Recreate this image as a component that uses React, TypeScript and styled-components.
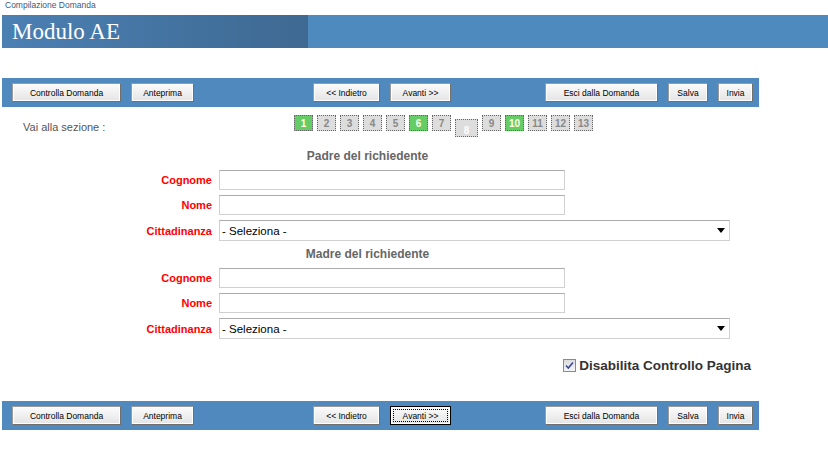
import React from 'react'
import styled, { createGlobalStyle, css } from 'styled-components'

const GlobalS = createGlobalStyle`
  html, body {
    margin: 0;
    padding: 0;
    background: #fff;
  }
  body {
    font-family: "Liberation Sans", Arial, sans-serif;
  }
`;

const PageS = styled.div`
  width: 828px;
  height: 460px;
  overflow: hidden;
  background: #fff;
`;

const Crumb = styled.div`
  height: 15px;
  padding-left: 5px;
  font-size: 8.5px;
  line-height: 11px;
  color: #3a5a80;
`;

const HeaderBar = styled.div`
  display: flex;
  height: 33px;
  margin-left: 2px;
  background: #4f8abf;
`;

const TitleBlock = styled.div`
  display: flex;
  align-items: center;
  width: 306px;
  padding-left: 10px;
  box-sizing: border-box;
  background: linear-gradient(to right, #4b80b3, #3e6992);

  h1 {
    margin: 0;
    font-family: "Liberation Serif", "Times New Roman", serif;
    font-weight: normal;
    font-size: 23px;
    color: #fff;
    line-height: 1;
    padding-bottom: 1px;
  }
`;

const Toolbar = styled.div<{ $top: number }>`
  display: flex;
  align-items: center;
  width: 757px;
  height: 29px;
  margin: ${p => p.$top}px 0 0 2px;
  padding-left: 10px;
  box-sizing: border-box;
  background: #5089bd;
`;

const Group = styled.div<{ $offset: number }>`
  display: flex;
  gap: 10px;
  margin-left: ${p => p.$offset}px;
`;

const Btn = styled.button<{ $w: number; $focus?: boolean }>`
  width: ${p => p.$w}px;
  height: 19px;
  padding: 0;
  font-family: "Liberation Sans", Arial, sans-serif;
  font-size: 8.5px;
  color: #000;
  background: linear-gradient(#fbfbfb, #e4e4e4);
  border: 1px solid #6f6f6f;
  border-top-color: #9a9a9a;
  border-left-color: #9a9a9a;
  box-shadow: inset 0 0 0 1px #fdfdfd;
  cursor: pointer;

  ${p => p.$focus && css`
    border: 1px solid #000;
    outline: 1px dotted #000;
    outline-offset: -4px;
  `}
`;

const NavRow = styled.div`
  display: flex;
  align-items: flex-start;
  height: 22px;
  margin-top: 8px;
`;

const NavLabel = styled.div`
  width: 271px;
  padding: 6px 0 0 23px;
  font-size: 11px;
  color: #555;
`;

const Sections = styled.div`
  display: flex;
  align-items: flex-start;
  gap: 4px;
`;

const SecBox = styled.a<{ $done?: boolean; $current?: boolean }>`
  display: flex;
  align-items: center;
  justify-content: center;
  width: 17px;
  height: 14px;
  border: 1px dotted #666;
  background: ${p => (p.$done ? '#66cc66' : '#dddddd')};
  color: ${p => (p.$done ? '#ffffe8' : '#888')};
  font-size: 10px;
  font-weight: bold;
  text-decoration: none;

  ${p => p.$current && css`
    width: 21px;
    height: 16px;
    margin-top: 4px;
    color: #fff;
    align-items: flex-end;
  `}
`;

const FormBlock = styled.section<{ $top: number }>`
  margin-top: ${p => p.$top}px;
`;

const Heading = styled.h2`
  margin: 0 0 7px;
  width: 735px;
  text-align: center;
  font-size: 12px;
  line-height: 14px;
  color: #666;
`;

const Rows = styled.div`
  display: grid;
  grid-template-columns: 212px auto;
  column-gap: 7px;
  row-gap: 5px;
  align-items: center;
`;

const Label = styled.label`
  text-align: right;
  font-size: 11px;
  font-weight: bold;
  color: #f00;
`;

const TextInput = styled.input`
  width: 346px;
  height: 20px;
  box-sizing: border-box;
  border: 1px solid #d0d0d0;
  border-top-color: #ababab;
  font-family: "Liberation Sans", Arial, sans-serif;
  font-size: 12px;
  padding: 0 3px;
`;

const SelectBox = styled.div`
  display: flex;
  align-items: center;
  justify-content: space-between;
  width: 511px;
  height: 21px;
  box-sizing: border-box;
  padding: 0 4px 0 2px;
  border: 1px solid #d0d0d0;
  border-top-color: #ababab;
  font-size: 11.5px;
  color: #000;
  background: #fff;
`;

const CheckRow = styled.div`
  display: flex;
  justify-content: flex-end;
  align-items: center;
  gap: 3px;
  width: 751px;
  height: 16px;
  margin-top: 18px;
  font-size: 13.5px;
  font-weight: bold;
  color: #333;
`;

const CheckBox = styled.span`
  display: inline-flex;
  width: 11px;
  height: 11px;
  border: 1px solid #8a8a8a;
  background: linear-gradient(#dcdcdc, #f6f6f6);
`;

function Select() {
  return (
    <SelectBox>
      <span>- Seleziona -</span>
      <svg width="8" height="5" viewBox="0 0 8 5">
        <path d="M0 0 H8 L4 5 Z" fill="#000" />
      </svg>
    </SelectBox>
  )
}

function Person({ title, top }: { title: string; top: number }) {
  return (
    <FormBlock $top={top}>
      <Heading>{title}</Heading>
      <Rows>
        <Label>Cognome</Label>
        <TextInput type="text" />
        <Label>Nome</Label>
        <TextInput type="text" />
        <Label>Cittadinanza</Label>
        <Select />
      </Rows>
    </FormBlock>
  )
}

function Bar({ top, focusNext }: { top: number; focusNext?: boolean }) {
  return (
    <Toolbar $top={top}>
      <Group $offset={0}>
        <Btn $w={109}>Controlla Domanda</Btn>
        <Btn $w={63}>Anteprima</Btn>
      </Group>
      <Group $offset={119}>
        <Btn $w={67}>&lt;&lt; Indietro</Btn>
        <Btn $w={61} $focus={focusNext}>Avanti &gt;&gt;</Btn>
      </Group>
      <Group $offset={94}>
        <Btn $w={113}>Esci dalla Domanda</Btn>
        <Btn $w={40}>Salva</Btn>
        <Btn $w={35}>Invia</Btn>
      </Group>
    </Toolbar>
  )
}

const sections = [1, 2, 3, 4, 5, 6, 7, 8, 9, 10, 11, 12, 13];
const done = [1, 6, 10];

export default function App() {
  return (
    <PageS>
      <GlobalS />
      <Crumb>Compilazione Domanda</Crumb>
      <HeaderBar>
        <TitleBlock><h1>Modulo AE</h1></TitleBlock>
      </HeaderBar>

      <Bar top={30} />

      <NavRow>
        <NavLabel>Vai alla sezione :</NavLabel>
        <Sections>
          {sections.map((n) => (
            <SecBox key={n} $done={done.includes(n)} $current={n === 8}>{n}</SecBox>
          ))}
        </Sections>
      </NavRow>

      <Person title="Padre del richiedente" top={12} />
      <Person title="Madre del richiedente" top={6} />

      <CheckRow>
        <CheckBox>
          <svg width="11" height="11" viewBox="0 0 11 11">
            <path d="M2 5.5 L4.3 8 L9 2.5" stroke="#3a4a9a" strokeWidth="1.6" fill="none" />
          </svg>
        </CheckBox>
        Disabilita Controllo Pagina
      </CheckRow>

      <Bar top={28} focusNext />
    </PageS>
  )
}
